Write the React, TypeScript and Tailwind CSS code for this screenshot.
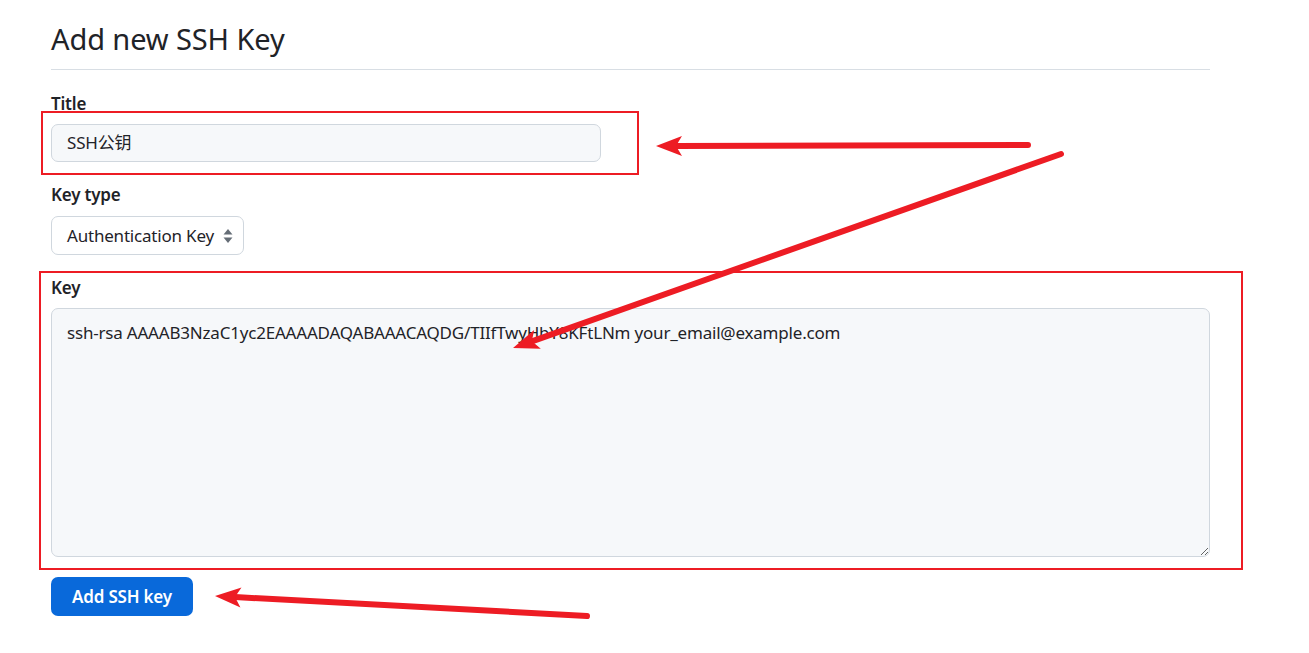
import React from "react";

const font = { fontFamily: '"Noto Sans", "Noto Sans CJK SC", sans-serif' };

function Arrow({ x1, y1, x2, y2 }: { x1: number; y1: number; x2: number; y2: number }) {
  // arrow from (x1,y1) to tip (x2,y2)
  const dx = x2 - x1;
  const dy = y2 - y1;
  const len = Math.hypot(dx, dy);
  const ux = dx / len;
  const uy = dy / len;
  const headLen = 26;
  const headW = 10;
  const bx = x2 - ux * headLen;
  const by = y2 - uy * headLen;
  const nx = -uy;
  const ny = ux;
  const neckX = x2 - ux * (headLen - 6);
  const neckY = y2 - uy * (headLen - 6);
  return (
    <g>
      <line x1={x1} y1={y1} x2={neckX} y2={neckY} stroke="#ed1c24" strokeWidth={6} strokeLinecap="round" />
      <polygon
        points={`${x2},${y2} ${bx + nx * headW},${by + ny * headW} ${neckX},${neckY} ${bx - nx * headW},${by - ny * headW}`}
        fill="#ed1c24"
      />
    </g>
  );
}

export default function App() {
  return (
    <div className="relative w-[1309px] h-[653px] bg-white overflow-hidden text-[#1f2328] tracking-[-0.2px]" style={font}>
      <div className="w-[1159px] ml-[51px] pt-[18px]">
        <div className="border-b border-[#d8dee4] pb-[9px]">
          <h2 className="text-[29px] leading-[42px] font-normal tracking-[-0.1px]">Add new SSH Key</h2>
        </div>

        <div className="mt-[22px]">
          <label className="block text-[17px] font-semibold leading-[24px]">Title</label>
          <div className="mt-[8px] w-[550px] h-[38px] rounded-[7px] border border-[#d0d7de] bg-[#f6f8fa] flex items-center px-[15px] text-[17px]">
            SSH公钥
          </div>
        </div>

        <div className="mt-[21px]">
          <label className="block text-[17px] font-semibold leading-[24px]">Key type</label>
          <div className="mt-[9px] w-[193px] h-[39px] rounded-[7px] border border-[#d0d7de] bg-white flex items-center pl-[15px] pr-[9px] justify-between text-[17px]">
            <span>Authentication Key</span>
            <svg width="12" height="18" viewBox="0 0 12 18">
              <path d="M6 2 L10.5 7.5 H1.5 Z" fill="#656d76" />
              <path d="M6 16 L10.5 10.5 H1.5 Z" fill="#656d76" />
            </svg>
          </div>
        </div>

        <div className="mt-[21px]">
          <label className="block text-[17px] font-semibold leading-[24px]">Key</label>
          <textarea
            className="mt-[8px] block w-[1159px] h-[249px] rounded-[7px] border border-[#d0d7de] bg-[#f6f8fa] px-[15px] py-[11px] text-[17px] leading-[26px] tracking-[-0.2px] resize-y outline-none"
            style={font}
            defaultValue="ssh-rsa AAAAB3NzaC1yc2EAAAADAQABAAACAQDG/TIIfTwyHbY8KFtLNm your_email@example.com"
          />
        </div>

        <button className="mt-[20px] h-[39px] w-[142px] rounded-[7px] bg-[#0969da] text-white text-[17px] font-semibold">
          Add SSH key
        </button>
      </div>

      <svg className="absolute inset-0 pointer-events-none" width="1309" height="653">
        <rect x="42" y="112" width="596" height="62" fill="none" stroke="#ed1c24" strokeWidth="2" />
        <rect x="40" y="272" width="1202" height="297" fill="none" stroke="#ed1c24" strokeWidth="2" />
        <Arrow x1={1028} y1={145} x2={656} y2={146} />
        <Arrow x1={1061} y1={154} x2={513} y2={348} />
        <Arrow x1={587} y1={616} x2={215} y2={596} />
      </svg>
    </div>
  );
}
